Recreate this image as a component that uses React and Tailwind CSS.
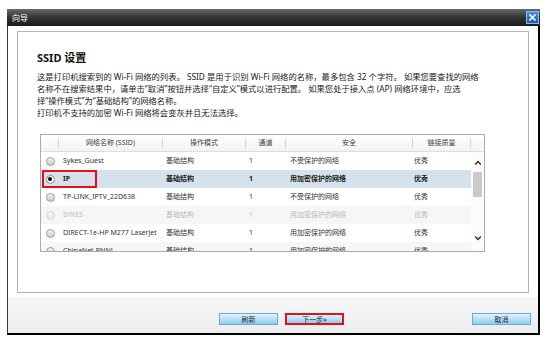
import React from 'react';

const rows = [
  { name: 'Sykes_Guest', mode: '基础结构', ch: '1', sec: '不受保护的网络', q: '优秀' },
  { name: 'IP', mode: '基础结构', ch: '1', sec: '用加密保护的网络', q: '优秀', selected: true },
  { name: 'TP-LINK_IPTV_22D638', mode: '基础结构', ch: '1', sec: '不受保护的网络', q: '优秀' },
  { name: 'SYKES', mode: '基础结构', ch: '1', sec: '用加密保护的网络', q: '优秀', disabled: true },
  { name: 'DIRECT-1e-HP M277 LaserJet', mode: '基础结构', ch: '1', sec: '用加密保护的网络', q: '优秀' },
  { name: 'ChinaNet-PNNJ', mode: '基础结构', ch: '1', sec: '用加密保护的网络', q: '优秀' },
];

function Radio({ checked, disabled }) {
  if (checked) {
    return (
      <span className="flex h-[9px] w-[9px] items-center justify-center rounded-full border border-[#8a8a8a] bg-white">
        <span className="h-[4px] w-[4px] rounded-full bg-black" />
      </span>
    );
  }
  return (
    <span
      className={
        disabled
          ? 'block h-[9px] w-[9px] rounded-full border border-[#d4d4d4] bg-gradient-to-b from-[#fafafa] to-[#e6e6e6]'
          : 'block h-[9px] w-[9px] rounded-full border border-[#9c9c9c] bg-gradient-to-b from-[#f4f4f4] to-[#c9c9c9]'
      }
    />
  );
}

function Sep() {
  return <span className="block h-[9px] w-px bg-[#cfcfcf]" />;
}

function Button({ children, marked, className = '' }) {
  return (
    <div
      className={`h-[12px] w-[59px] ${marked ? 'border-2 border-[#e3101b]' : 'border border-[#6fa8d3]'} bg-gradient-to-b from-[#dff3fd] to-[#8ccdf1] flex items-center justify-center text-[7px] leading-none text-[#2a2a2a] ${className}`}
    >
      {children}
    </div>
  );
}

export default function App() {
  return (
    <div className="w-[550px] h-[345px] overflow-hidden bg-white font-['Noto_Sans','Noto_Sans_CJK_SC',sans-serif]">
      <div className="ml-[7px] pt-[9px] w-[533px]">
        {/* Title bar */}
        <div className="h-[17px] flex items-center justify-between bg-gradient-to-b from-[#6a6a6a] via-[#333333] to-[#1b1b1b] pl-[5px] pr-[1px]">
          <span className="text-[8px] leading-none text-white">向导</span>
          <span className="flex h-[13px] w-[13px] items-center justify-center border border-[#8fb8e6] bg-gradient-to-b from-[#4d8fdb] to-[#1c5aab]">
            <svg width="7" height="7" viewBox="0 0 7 7">
              <path d="M1 1 L6 6 M6 1 L1 6" stroke="white" strokeWidth="1.7" strokeLinecap="round" />
            </svg>
          </span>
        </div>

        {/* Body */}
        <div className="h-[309px] flex flex-col bg-white border-l border-l-[#3a3a3a] border-r-2 border-r-black border-b-2 border-b-black">
          <div className="mt-[5px] ml-[9px] w-[512px] h-[262px] border border-[#b4b4b4] pl-[19px] pt-[19px] text-[#222]">
            <div className="text-[11px] leading-[14px] font-bold text-[#111]">SSID 设置</div>
            <div className="mt-[6px] text-[8.3px] leading-[12px] whitespace-nowrap">
              <div>这是打印机搜索到的 Wi-Fi 网络的列表。 SSID 是用于识别 Wi-Fi 网络的名称，最多包含 32 个字符。 如果您要查找的网络</div>
              <div>名称不在搜索结果中，请单击“取消”按钮并选择“自定义”模式以进行配置。 如果您处于接入点 (AP) 网络环境中，应选</div>
              <div>择“操作模式”为“基础结构”的网络名称。</div>
              <div>打印机不支持的加密 Wi-Fi 网络将会变灰并且无法选择。</div>
            </div>

            {/* Table */}
            <div className="mt-[15px] ml-[3px] w-[445px] border border-[#ababab] text-[7px] text-[#333]">
              <div className="h-[17px] flex items-center border-b border-[#dedede] bg-gradient-to-b from-white to-[#f3f3f3] text-[#444]">
                <span className="w-[17px]" />
                <Sep />
                <span className="w-[103px] text-center">网络名称 (SSID)</span>
                <Sep />
                <span className="w-[82px] text-center">操作模式</span>
                <Sep />
                <span className="w-[39px] text-center">通道</span>
                <Sep />
                <span className="w-[126px] text-center">安全</span>
                <Sep />
                <span className="w-[57px] text-center">链接质量</span>
                <Sep />
                <span className="flex-1" />
              </div>
              <div className="h-[99px] flex">
                <div className="w-[430px] overflow-hidden">
                  {rows.map((r, i) => {
                    const bg = r.selected ? 'bg-[#d5e2ec]' : i % 2 === 1 ? 'bg-[#f6f6f6]' : 'bg-white';
                    const tc = r.disabled ? 'text-[#b9b9b9]' : r.selected ? 'text-[#222] font-bold' : 'text-[#333]';
                    return (
                      <div key={r.name} className={`relative h-[18px] flex items-center ${bg} ${tc}`}>
                        <span className="w-[18px] flex justify-center">
                          <Radio checked={r.selected} disabled={r.disabled} />
                        </span>
                        <span className="w-[104px] pl-[4px] whitespace-nowrap">{r.name}</span>
                        <span className="w-[83px] pl-[3px]">{r.mode}</span>
                        <span className="w-[40px] pl-[3px]">{r.ch}</span>
                        <span className="w-[127px] pl-[4px]">{r.sec}</span>
                        <span className="w-[58px] pl-[1px]">{r.q}</span>
                        {r.selected && (
                          <span className="absolute left-[1px] top-0 h-[18px] w-[55px] border-2 border-[#e3101b]" />
                        )}
                      </div>
                    );
                  })}
                </div>
                <div className="w-[13px] flex flex-col items-center bg-[#fbfbfb] pt-[7px] pb-[9px]">
                  <svg width="8" height="8" viewBox="0 0 8 8">
                    <path d="M1.2 5.6 L4 2.6 L6.8 5.6" fill="none" stroke="#2e2e2e" strokeWidth="1.5" />
                  </svg>
                  <div className="mt-[5px] h-[25px] w-[9px] bg-[#c9c9c9]" />
                  <div className="flex-1" />
                  <svg width="8" height="8" viewBox="0 0 8 8">
                    <path d="M1.2 2.4 L4 5.4 L6.8 2.4" fill="none" stroke="#2e2e2e" strokeWidth="1.5" />
                  </svg>
                </div>
              </div>
            </div>
          </div>

          {/* Footer */}
          <div className="mt-[4px] flex-1 flex items-start pt-[16px] bg-gradient-to-b from-[#f7f7f7] to-[#ededed]">
            <Button className="ml-[211px]">刷新</Button>
            <Button marked className="ml-[7px]">下一步»</Button>
            <Button className="ml-auto mr-[7px]">取消</Button>
          </div>
        </div>
      </div>
    </div>
  );
}
